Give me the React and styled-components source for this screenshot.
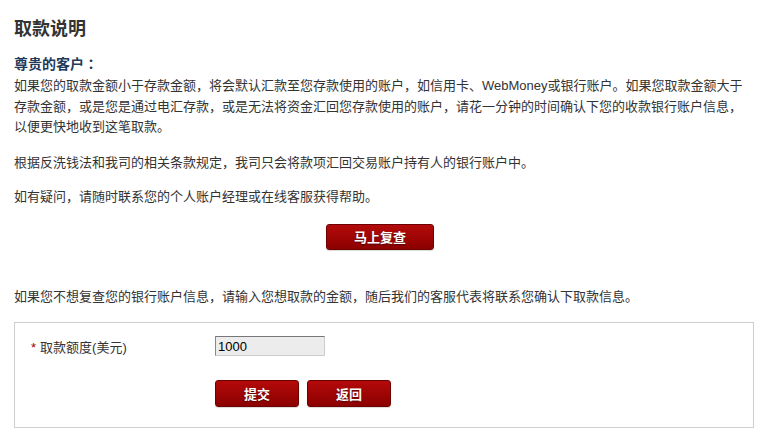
import React from "react"
import styled, { createGlobalStyle } from "styled-components"

const GlobalStyle = createGlobalStyle`
  body {
    margin: 0;
    background: #fff;
    font-family: "Liberation Sans", "Noto Sans CJK SC", sans-serif;
    color: #333;
  }
`

const Page = styled.div`
  width: 740px;
  padding: 17px 12px 10px 14px;
  font-size: 13px;
`
const Title = styled.h1`
  margin: 0;
  font-size: 18px;
  line-height: 24px;
  font-weight: bold;
  color: #333;
`
const Greeting = styled.h2`
  margin: 12px 0 2px;
  font-size: 14px;
  line-height: 20px;
  font-weight: bold;
  color: #1f3a5a;
`
const Colon = styled.span`
  font-family: "Noto Sans CJK JP", sans-serif;
`
const Para = styled.p`
  margin: 0 0 ${(p) => p.$gap ?? 14}px;
  line-height: 20.5px;
  color: #333;
`
const Center = styled.div`
  display: flex;
  justify-content: center;
  padding-right: 8px;
  margin: 16px 0 37px;
`
const RedButton = styled.button`
  width: ${(p) => p.$w}px;
  height: ${(p) => p.$h}px;
  padding: 0;
  border: 1px solid #6e0000;
  border-radius: 3px;
  background: linear-gradient(#b30a0a, #8c0000);
  color: #fff;
  font-family: "Noto Sans CJK SC", sans-serif;
  font-size: 13px;
  font-weight: bold;
  text-shadow: 0 1px 1px rgba(60, 0, 0, 0.7);
  box-shadow: 0 1px 1px rgba(0, 0, 0, 0.15);
  cursor: pointer;
`
const FormBox = styled.div`
  margin-top: 15px;
  box-sizing: border-box;
  width: 740px;
  border: 1px solid #cfcfcf;
  padding: 13px 16px 20px;
  display: flex;
  flex-direction: column;
  gap: 24px;
`
const Row = styled.div`
  display: flex;
  align-items: center;
`
const Label = styled.label`
  width: 184px;
  color: #333;
`
const Star = styled.span`
  color: #a30000;
  margin-right: 4px;
`
const Input = styled.input`
  box-sizing: border-box;
  width: 110px;
  height: 20px;
  padding: 0 2px;
  background: #ececec;
  border: 1px solid #ccc;
  border-top-color: #777;
  border-left-color: #888;
  font-family: "Liberation Sans", sans-serif;
  font-size: 13px;
  color: #000;
`
const Actions = styled.div`
  display: flex;
  gap: 8px;
  padding-left: 184px;
`

export default function App() {
  return (
    <>
      <GlobalStyle />
      <Page>
        <Title>取款说明</Title>
        <Greeting>
          尊贵的客户<Colon>：</Colon>
        </Greeting>
        <Para $gap={15}>
          如果您的取款金额小于存款金额，将会默认汇款至您存款使用的账户，如信用卡、WebMoney或银行账户。如果您取款金额大于存款金额，或是您是通过电汇存款，或是无法将资金汇回您存款使用的账户，请花一分钟的时间确认下您的收款银行账户信息，以便更快地收到这笔取款。
        </Para>
        <Para>根据反洗钱法和我司的相关条款规定，我司只会将款项汇回交易账户持有人的银行账户中。</Para>
        <Para $gap={0}>如有疑问，请随时联系您的个人账户经理或在线客服获得帮助。</Para>
        <Center>
          <RedButton $w={108} $h={26}>马上复查</RedButton>
        </Center>
        <Para $gap={0}>如果您不想复查您的银行账户信息，请输入您想取款的金额，随后我们的客服代表将联系您确认下取款信息。</Para>
        <FormBox>
          <Row>
            <Label>
              <Star>*</Star>取款额度(美元)
            </Label>
            <Input defaultValue="1000" />
          </Row>
          <Actions>
            <RedButton $w={84} $h={27}>提交</RedButton>
            <RedButton $w={84} $h={27}>返回</RedButton>
          </Actions>
        </FormBox>
      </Page>
    </>
  )
}
